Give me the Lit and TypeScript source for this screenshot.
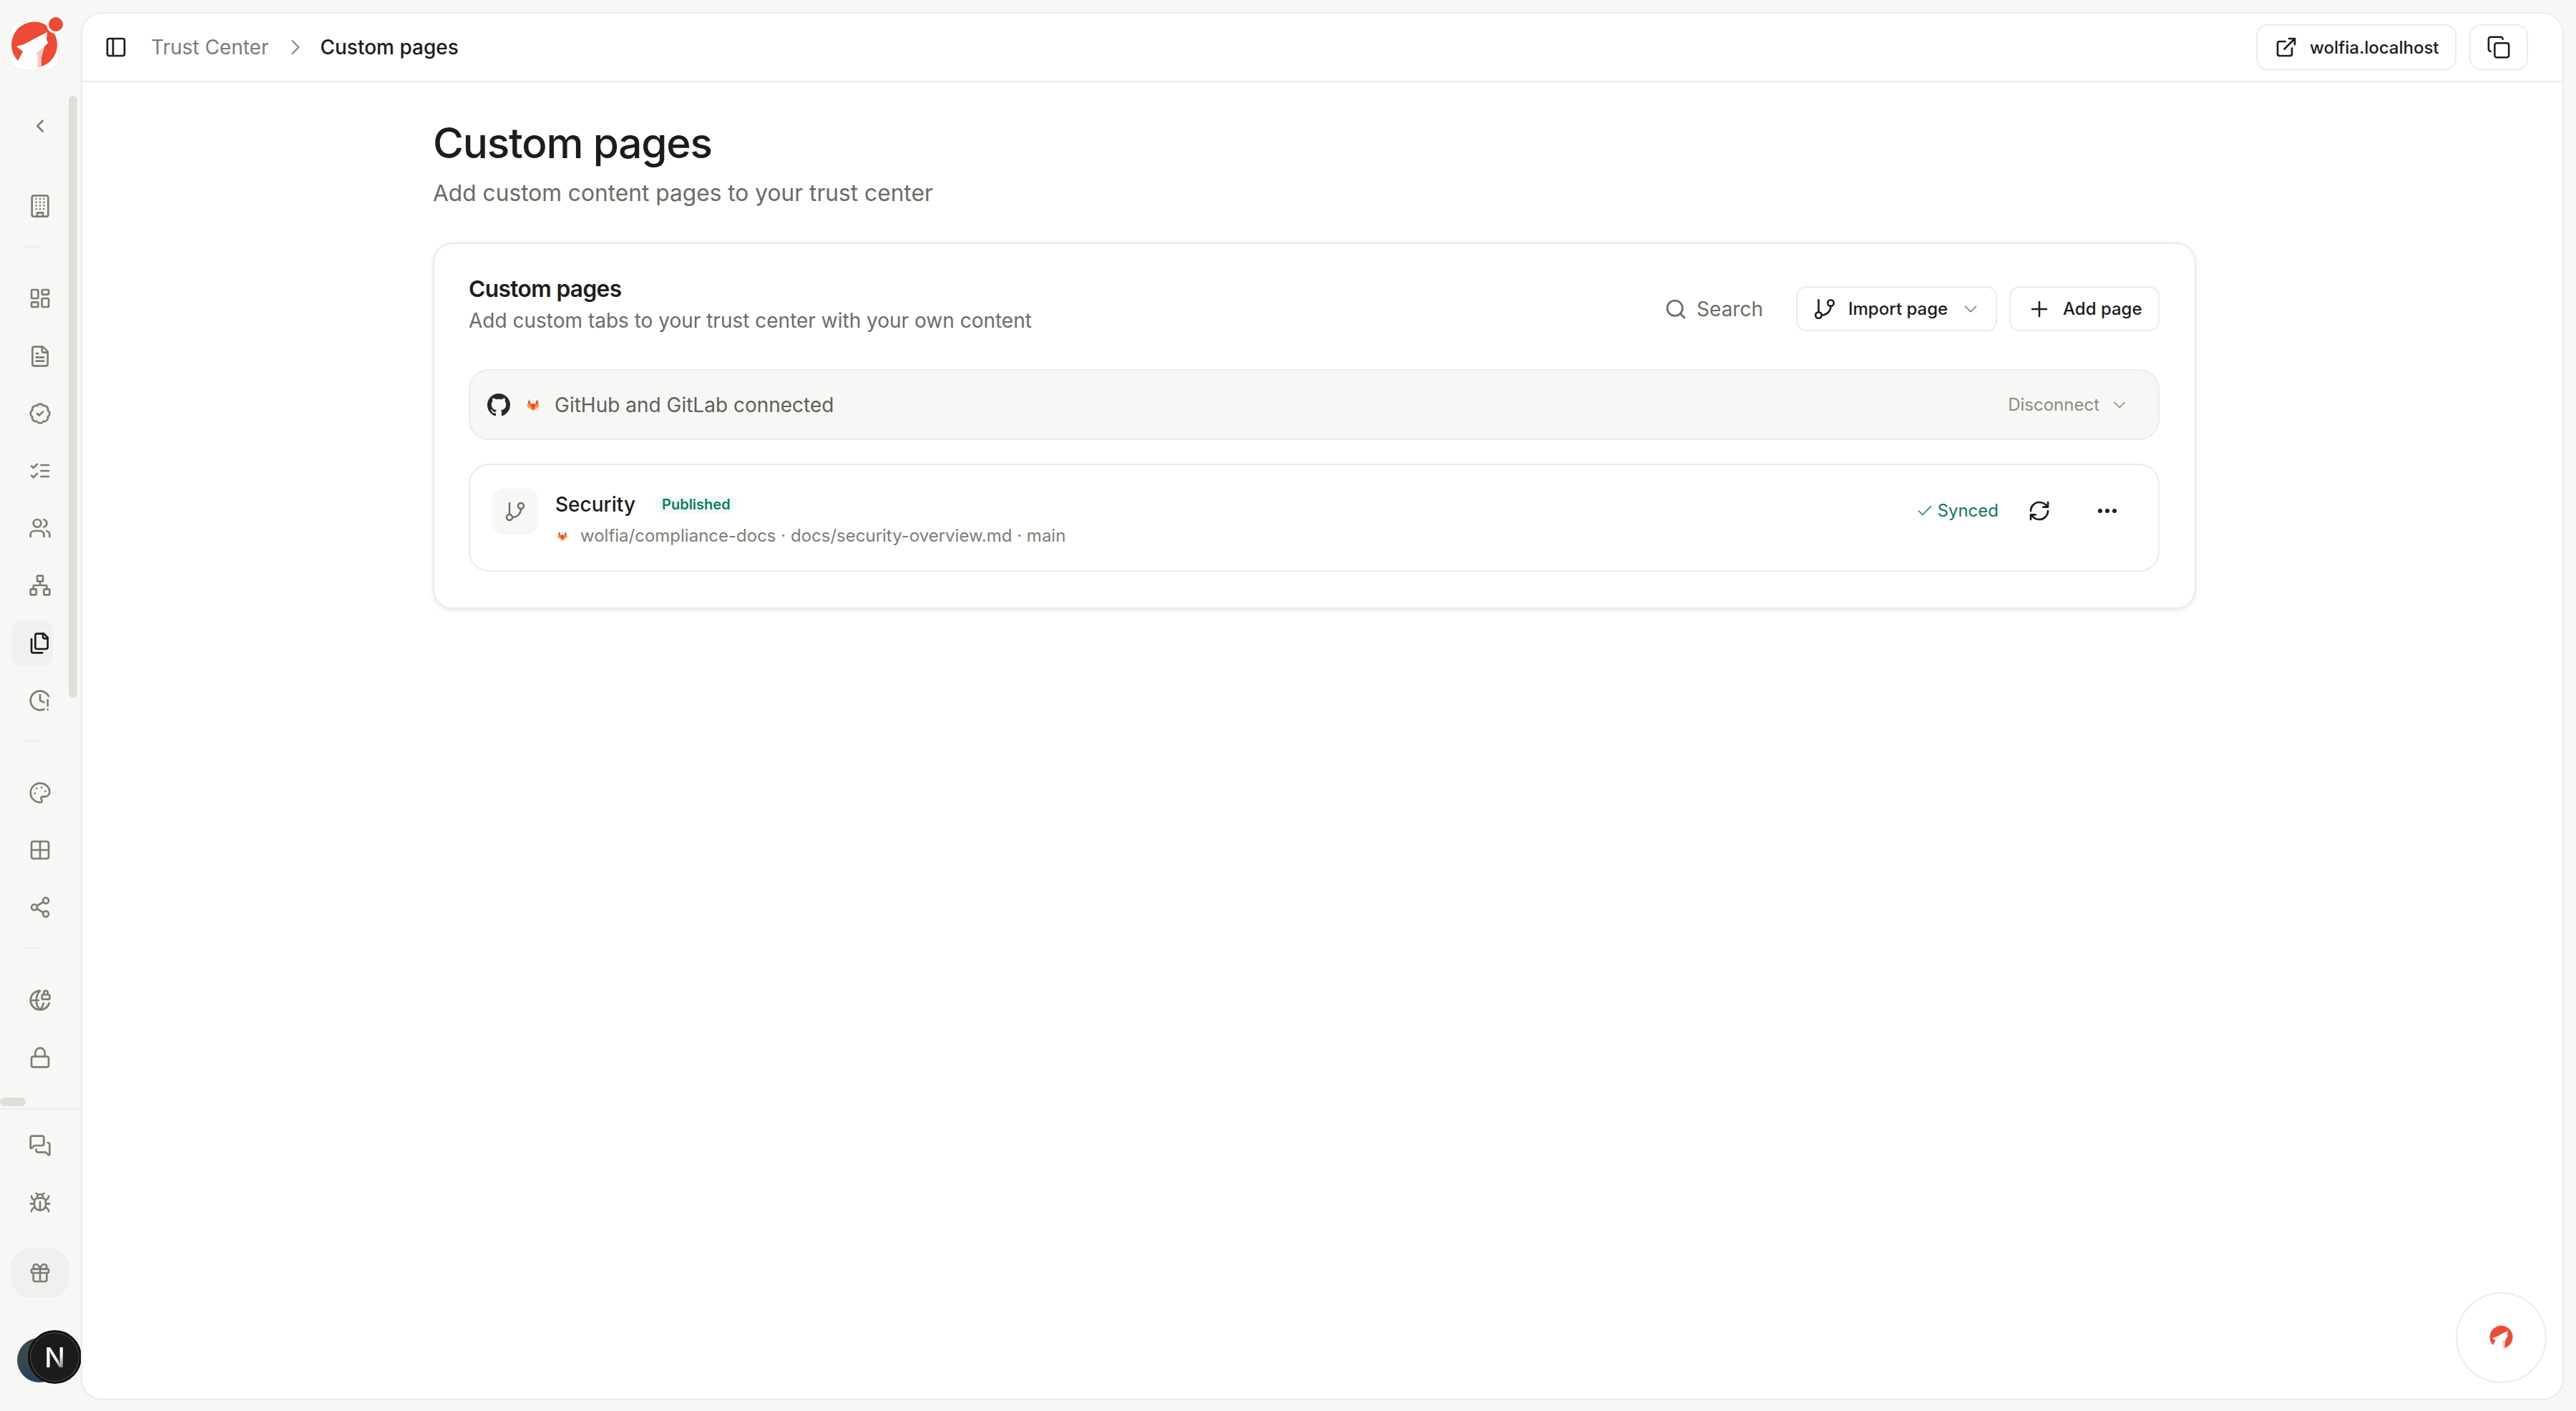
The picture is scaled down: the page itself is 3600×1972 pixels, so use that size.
import { LitElement, html, css, svg } from "lit";
import { customElement } from "lit/decorators.js";

const ICONS: Record<string, unknown> = {
  chevronLeft: svg`<path d="m15 18-6-6 6-6"/>`,
  chevronRight: svg`<path d="m9 18 6-6-6-6"/>`,
  chevronDown: svg`<path d="m6 9 6 6 6-6"/>`,
  building: svg`<rect x="3.5" y="1" width="17" height="22" rx="2"/><path d="M9 23v-4h6v4"/><path d="M8 4.500h.01M12 4.500h.01M16 4.500h.01M8 8h.01M12 8h.01M16 8h.01M8 11.500h.01M12 11.500h.01M16 11.500h.01M8 15h.01M12 15h.01M16 15h.01"/>`,
  dashboard: svg`<rect x="3" y="3" width="7" height="9" rx="1"/><rect x="14" y="3" width="7" height="5" rx="1"/><rect x="14" y="12" width="7" height="9" rx="1"/><rect x="3" y="16" width="7" height="5" rx="1"/>`,
  file: svg`<path d="M15 2H6a2 2 0 0 0-2 2v16a2 2 0 0 0 2 2h12a2 2 0 0 0 2-2V7Z"/><path d="M14 2v4a2 2 0 0 0 2 2h4"/><path d="M10 9H8M16 13H8M16 17H8"/>`,
  badge: svg`<path d="M3.85 8.62a4 4 0 0 1 4.78-4.77 4 4 0 0 1 6.74 0 4 4 0 0 1 4.78 4.78 4 4 0 0 1 0 6.74 4 4 0 0 1-4.77 4.78 4 4 0 0 1-6.75 0 4 4 0 0 1-4.78-4.77 4 4 0 0 1 0-6.76Z"/><path d="m9 12 2 2 4-4"/>`,
  listChecks: svg`<path d="m3 17 2 2 4-4M3 7l2 2 4-4M13 6h8M13 12h8M13 18h8"/>`,
  users: svg`<path d="M16 21v-2a4 4 0 0 0-4-4H6a4 4 0 0 0-4 4v2"/><circle cx="9" cy="7" r="4"/><path d="M22 21v-2a4 4 0 0 0-3-3.87M16 3.13a4 4 0 0 1 0 7.75"/>`,
  network: svg`<rect x="16" y="16" width="6" height="6" rx="1"/><rect x="2" y="16" width="6" height="6" rx="1"/><rect x="9" y="2" width="6" height="6" rx="1"/><path d="M5 16v-3a1 1 0 0 1 1-1h12a1 1 0 0 1 1 1v3M12 12V8"/>`,
  files: svg`<path d="M20 7h-3a2 2 0 0 1-2-2V2"/><path d="M9 18a2 2 0 0 1-2-2V4a2 2 0 0 1 2-2h7l4 4v10a2 2 0 0 1-2 2Z"/><path d="M3 7.6v12.8A1.6 1.6 0 0 0 4.6 22h9.8"/>`,
  clockAlert: svg`<path d="M12 6v6l4 2M16 21.16a10 10 0 1 1 5-13.516M20 11.5v6M20 21.5h.01"/>`,
  palette: svg`<path d="M12 22a1 1 0 0 1 0-20 10 9 0 0 1 10 9 5 5 0 0 1-5 5h-2.25a1.75 1.75 0 0 0-1.4 2.8l.3.4a1.75 1.75 0 0 1-1.4 2.8z"/><path d="M13.5 6.5h.01M17.5 10.5h.01M6.5 12.5h.01M8.5 7.5h.01"/>`,
  grid: svg`<rect x="3" y="3" width="18" height="18" rx="2"/><path d="M12 3v18M3 12h18"/>`,
  share: svg`<circle cx="18" cy="5" r="3"/><circle cx="6" cy="12" r="3"/><circle cx="18" cy="19" r="3"/><path d="m8.59 13.51 6.83 3.98M15.41 6.51l-6.82 3.98"/>`,
  globeLock: svg`<path d="M15.686 15A14.5 14.5 0 0 1 12 22a14.5 14.5 0 0 1 0-20 10 10 0 1 0 9.542 13M2 12h8.5M20 6V4a2 2 0 1 0-4 0v2"/><rect x="14" y="6" width="8" height="5" rx="1"/>`,
  lock: svg`<rect x="3" y="11" width="18" height="11" rx="2"/><path d="M7 11V7a5 5 0 0 1 10 0v4"/>`,
  chat: svg`<path d="M16 10a2 2 0 0 1-2 2H6.828a2 2 0 0 0-1.414.586l-2.202 2.202A.71.71 0 0 1 2 14.286V4a2 2 0 0 1 2-2h10a2 2 0 0 1 2 2z"/><path d="M20 9a2 2 0 0 1 2 2v10.286a.71.71 0 0 1-1.212.502l-2.202-2.202A2 2 0 0 0 17.172 19H10a2 2 0 0 1-2-2v-1"/>`,
  bug: svg`<path d="m8 2 1.88 1.88M14.12 3.88 16 2M9 7.13v-1a3.003 3.003 0 1 1 6 0v1M12 20c-3.3 0-6-2.7-6-6v-3a4 4 0 0 1 4-4h4a4 4 0 0 1 4 4v3c0 3.3-2.7 6-6 6M12 20v-9M6.53 9C4.6 8.8 3 7.1 3 5M6 13H2M3 21c0-2.1 1.7-3.9 3.8-4M20.97 5c0 2.1-1.6 3.8-3.5 4M22 13h-4M17.2 17c2.1.1 3.8 1.9 3.8 4"/>`,
  gift: svg`<rect x="3" y="8" width="18" height="4" rx="1"/><path d="M12 8v13M19 12v7a2 2 0 0 1-2 2H7a2 2 0 0 1-2-2v-7M7.5 8a2.5 2.5 0 0 1 0-5A4.8 8 0 0 1 12 8a4.8 8 0 0 1 4.5-5 2.5 2.5 0 0 1 0 5"/>`,
  panel: svg`<rect x="3" y="3" width="18" height="18" rx="2"/><path d="M9 3v18"/>`,
  external: svg`<path d="M15 3h6v6M10 14 21 3M18 13v6a2 2 0 0 1-2 2H5a2 2 0 0 1-2-2V8a2 2 0 0 1 2-2h6"/>`,
  copy: svg`<rect x="8" y="8" width="14" height="14" rx="2"/><path d="M4 16c-1.1 0-2-.9-2-2V4c0-1.1.9-2 2-2h10c1.1 0 2 .9 2 2"/>`,
  search: svg`<circle cx="11" cy="11" r="8"/><path d="m21 21-4.3-4.3"/>`,
  branch: svg`<path d="M6 3v12"/><circle cx="18" cy="6" r="3"/><circle cx="6" cy="18" r="3"/><path d="M18 9a9 9 0 0 1-9 9"/>`,
  plus: svg`<path d="M5 12h14M12 5v14"/>`,
  check: svg`<path d="M20 6 9 17l-5-5"/>`,
  refresh: svg`<path d="M3 12a9 9 0 0 1 9-9 9.75 9.75 0 0 1 6.74 2.74L21 8M21 3v5h-5M21 12a9 9 0 0 1-9 9 9.75 9.75 0 0 1-6.74-2.74L3 16M8 16H3v5"/>`,
};

function icon(name: string, size = 32, sw = 2) {
  return html`<svg class="ic" width=${size} height=${size} viewBox="0 0 24 24" fill="none" stroke="currentColor" stroke-width=${sw} stroke-linecap="round" stroke-linejoin="round">${ICONS[name]}</svg>`;
}

function wolf(size: number, dot = false) {
  return html`<svg class="wolf" width=${size} height=${size} viewBox="0 0 66 66">
    <circle cx="33" cy="31.5" r="32" fill="#ee4a36"/>
    <path fill="#fff" d="M51 14 L35 22 L28 26 L18 31 L8 34 L17 41 L10 54 L15 66 L42 66 L43 49 L47 34 L52 29 L50 24 Z"/>
    <path fill="#f5c9c3" d="M35 44 L47 34 L43 47 L43 63 L37 63 L38 47 Z"/>
    ${dot
      ? svg`<circle cx="63" cy="3" r="13" fill="#fff"/><circle cx="63" cy="3" r="10" fill="#ee4a36"/>`
      : ""}
  </svg>`;
}

function gitlab(size: number) {
  return html`<svg class="ic" width=${size} height=${size} viewBox="0 0 24 24">
    <path fill="#e24329" d="M12 22 8 10h8z"/>
    <path fill="#fc6d26" d="M12 22 8 10H3zM12 22l4-12h5z"/>
    <path fill="#e24329" d="M3 10 5.5 2.5 8 10zM21 10l-2.500-7.500L16 10z"/>
    <path fill="#fca326" d="M3 10l-1.200 4c-.1.4 0 .8.4 1.100L12 22zM21 10l1.200 4c.1.4 0 .8-.4 1.100L12 22z"/>
  </svg>`;
}

const NAV_GROUPS = [
  ["building"],
  ["dashboard", "file", "badge", "listChecks", "users", "network", "files", "clockAlert"],
  ["palette", "grid", "share"],
  ["globeLock", "lock"],
];

@customElement("app-root")
export class AppRoot extends LitElement {
  static styles = css`
    :host {
      display: flex;
      height: 100vh;
      background: #f7f7f5;
      font-family: Inter, "Liberation Sans", sans-serif;
      color: #1c1c1a;
      overflow: hidden;
    }
    .ic {
      display: block;
      flex: none;
      position: relative;
    }
    .sidebar {
      width: 113px;
      flex: none;
      display: flex;
      flex-direction: column;
      position: relative;
      isolation: isolate;
      color: #7d7d76;
    }
    .logo-wrap {
      height: 136px;
      padding: 31px 0 0 15px;
      box-sizing: border-box;
    }
    .logo {
      width: 66px;
      height: 66px;
      border-radius: 16px;
      background: #fff;
      box-shadow: 0 0 0 1px #eeeeec;
    }
    .wolf {
      display: block;
      overflow: visible;
    }
    .nav {
      flex: 1;
      position: relative;
    }
    .item {
      height: 80.2px;
      width: 80px;
      margin-left: 16px;
      display: flex;
      align-items: center;
      justify-content: center;
      position: relative;
    }
    .item.active {
      color: #1c1c1a;
    }
    .item.active::before {
      content: "";
      position: absolute;
      left: 0;
      top: 8px;
      width: 58px;
      height: 64px;
      border-radius: 16px;
      background: #f0f0ee;
    }
    .back {
      margin-bottom: 32px;
    }
    .sep {
      width: 26px;
      height: 2px;
      background: #ecece9;
      margin: 16px 0 31px 32px;
    }
    .vthumb {
      position: absolute;
      left: 96px;
      top: -2px;
      width: 12px;
      height: 841px;
      border-radius: 6px;
      background: #dededa;
    }
    .hthumb {
      position: absolute;
      left: 0;
      bottom: 3px;
      width: 36px;
      height: 12px;
      border-radius: 6px;
      background: #dededa;
    }
    .foot {
      border-top: 2px solid #ebebe9;
      padding: 10px 0 38px;
    }
    .foot .item {
      height: 80px;
    }
    .foot .gift {
      height: 68px;
      margin-top: 24px;
      border-radius: 26px;
      background: #f0f0ee;
      box-shadow: inset 0 0 0 1px #ebebe9;
    }
    .avatars {
      position: relative;
      height: 75px;
      margin-top: 46px;
    }
    .av-photo {
      position: absolute;
      left: 24px;
      top: 11px;
      width: 62px;
      height: 62px;
      border-radius: 50%;
      background: linear-gradient(#36494c 60%, #1f3f63);
    }
    .av-next {
      position: absolute;
      left: 39px;
      top: 0;
      width: 75px;
      height: 75px;
      box-sizing: border-box;
      border-radius: 50%;
      background: #1b1b1b;
      border: 3px solid #111;
      box-shadow: inset 0 0 0 1px #555;
      display: flex;
      align-items: center;
      justify-content: center;
      font-size: 38px;
      font-weight: 500;
    }
    .av-next span {
      background: linear-gradient(135deg, #fff 55%, #777 85%);
      -webkit-background-clip: text;
      background-clip: text;
      color: transparent;
    }
    .panel {
      flex: 1;
      margin: 17px 17px 15px 0;
      border: 2px solid #ebebe9;
      border-radius: 30px;
      background: #fff;
      position: relative;
      min-width: 0;
    }
    .topbar {
      height: 94px;
      border-bottom: 2px solid #ebebe9;
      display: flex;
      align-items: center;
      padding: 0 48px 0 31px;
    }
    .crumb {
      font-size: 28px;
      color: #7d7d76;
      margin-left: 33px;
    }
    .crumb-sep {
      color: #7d7d76;
      margin: 0 16px 0 20px;
    }
    .crumb-now {
      font-size: 28px;
      font-weight: 500;
      color: #1c1c1a;
    }
    .spacer {
      flex: 1;
    }
    .btn {
      display: flex;
      align-items: center;
      box-sizing: border-box;
      border: 2px solid #ebebe9;
      border-radius: 14px;
      background: #fff;
      font-size: 24px;
      font-weight: 500;
      color: #1c1c1a;
    }
    .btn.link {
      width: 280px;
      height: 64px;
      padding-left: 24px;
      gap: 17px;
      border-radius: 16px;
    }
    .btn.copy {
      width: 82px;
      height: 64px;
      justify-content: center;
      margin-left: 18px;
      border-radius: 16px;
    }
    .content {
      padding: 45px 0 0 490px;
      width: 2464px;
    }
    h1 {
      margin: 0;
      font-size: 58.5px;
      line-height: 80px;
      font-weight: 500;
      letter-spacing: -0.02em;
    }
    .lead {
      margin: 8px 0 47px;
      font-size: 31.7px;
      line-height: 44px;
      color: #6c6c66;
    }
    .card {
      box-sizing: border-box;
      height: 512px;
      border: 2px solid #ebebe9;
      border-radius: 28px;
      padding: 43px 49px 0 48px;
      box-shadow: 0 2px 6px rgba(0, 0, 0, 0.1);
    }
    .card-head {
      display: flex;
      justify-content: space-between;
      align-items: flex-start;
      margin-bottom: 46px;
    }
    h2 {
      margin: 0 0 2px;
      font-size: 31.7px;
      line-height: 40px;
      font-weight: 600;
      letter-spacing: -0.02em;
    }
    .card-sub {
      font-size: 28px;
      line-height: 44px;
      color: #6c6c66;
    }
    .actions {
      display: flex;
      align-items: center;
      padding-top: 16px;
    }
    .search {
      display: flex;
      align-items: center;
      gap: 13px;
      font-size: 28px;
      color: #6c6c66;
      margin-right: 46px;
    }
    .btn.import,
    .btn.add {
      height: 63px;
    }
    .btn.import {
      width: 281px;
      padding-left: 21px;
      gap: 16px;
      margin-right: 17px;
    }
    .btn.import .ic:last-child {
      color: #7d7d76;
      margin-left: 1px;
    }
    .btn.add {
      width: 210px;
      padding-left: 23px;
      gap: 16px;
    }
    .connect {
      height: 99px;
      box-sizing: border-box;
      display: flex;
      align-items: center;
      border: 2px solid #ebebe9;
      border-radius: 28px;
      background: #f7f7f5;
      padding: 0 40px 0 24px;
      margin-bottom: 33px;
    }
    .gh {
      fill: #24292f;
      margin-right: 22px;
      display: block;
    }
    .connect-text {
      font-size: 28px;
      color: #5f5f5a;
      margin-left: 20px;
    }
    .disconnect {
      display: flex;
      align-items: center;
      gap: 14px;
      margin-left: auto;
      font-size: 24px;
      color: #8b8b85;
    }
    .page-row {
      height: 151px;
      box-sizing: border-box;
      display: flex;
      align-items: center;
      border: 2px solid #ebebe9;
      border-radius: 28px;
      padding: 0 58px 0 31px;
    }
    .page-icon {
      width: 64px;
      height: 64px;
      border-radius: 16px;
      background: #f7f7f5;
      color: #6c6c66;
      display: flex;
      align-items: center;
      justify-content: center;
      margin: 0 24px 18px 0;
    }
    .page-text {
      margin-top: 4px;
    }
    .page-title {
      display: flex;
      align-items: center;
      gap: 28px;
      font-size: 28px;
      line-height: 40px;
      font-weight: 500;
    }
    .badge {
      font-size: 20px;
      line-height: 24px;
      font-weight: 600;
      color: #0d7a66;
      background: #f2faf7;
      border-radius: 10px;
      padding: 0 9px;
    }
    .page-sub {
      display: flex;
      align-items: center;
      margin-top: 6px;
      font-size: 24px;
      line-height: 36px;
      color: #7d7d76;
    }
    .page-sub .ic {
      margin: 0 17px 0 2px;
    }
    .row-right {
      display: flex;
      align-items: center;
      margin: 0 0 20px auto;
    }
    .synced {
      display: flex;
      align-items: center;
      gap: 5px;
      font-size: 24px;
      font-weight: 400;
      color: #0d7a66;
    }
    .sync {
      margin-left: 41px;
      color: #1c1c1a;
    }
    .dots {
      margin-left: 66px;
      display: flex;
      gap: 4px;
    }
    .dots i {
      width: 6px;
      height: 6px;
      border-radius: 50%;
      background: #1c1c1a;
    }
    .fab {
      position: absolute;
      right: 22px;
      bottom: 22px;
      width: 127px;
      height: 127px;
      box-sizing: border-box;
      border: 2px solid #ebebe9;
      border-radius: 50%;
      background: #fff;
      display: flex;
      align-items: center;
      justify-content: center;
    }
  `;

  renderNav() {
    return NAV_GROUPS.map(
      (group, i) => html`
        ${i > 0 ? html`<div class="sep"></div>` : ""}
        ${group.map(
          (name) =>
            html`<div class="item ${name === "files" ? "active" : ""}">${icon(name)}</div>`,
        )}
      `,
    );
  }

  render() {
    return html`
      <aside class="sidebar">
        <div class="logo-wrap"><div class="logo">${wolf(66, true)}</div></div>
        <div class="nav">
          <div class="vthumb"></div>
          <div class="item back">${icon("chevronLeft", 30)}</div>
          ${this.renderNav()}
          <div class="hthumb"></div>
        </div>
        <div class="foot">
          <div class="item">${icon("chat")}</div>
          <div class="item">${icon("bug")}</div>
          <div class="item gift">${icon("gift")}</div>
          <div class="avatars">
            <div class="av-photo"></div>
            <div class="av-next"><span>N</span></div>
          </div>
        </div>
      </aside>
      <section class="panel">
        <header class="topbar">
          ${icon("panel", 32)}
          <span class="crumb">Trust Center</span>
          <span class="crumb-sep">${icon("chevronRight", 36, 1.3)}</span>
          <span class="crumb-now">Custom pages</span>
          <span class="spacer"></span>
          <div class="btn link">${icon("external", 32)}wolfia.localhost</div>
          <div class="btn copy">${icon("copy", 34, 1.8)}</div>
        </header>
        <div class="content">
          <h1>Custom pages</h1>
          <p class="lead">Add custom content pages to your trust center</p>
          <div class="card">
            <div class="card-head">
              <div>
                <h2>Custom pages</h2>
                <div class="card-sub">Add custom tabs to your trust center with your own content</div>
              </div>
              <div class="actions">
                <div class="search">${icon("search", 32)}Search</div>
                <div class="btn import">
                  ${icon("branch", 34, 1.8)}Import page${icon("chevronDown", 30, 1.4)}
                </div>
                <div class="btn add">${icon("plus", 34, 1.8)}Add page</div>
              </div>
            </div>
            <div class="connect">
              <svg class="gh" width="32" height="32" viewBox="0 0 16 16"><path d="M8 0C3.58 0 0 3.58 0 8c0 3.54 2.29 6.530 5.470 7.590.4.070.55-.17.55-.38 0-.19-.010-.82-.010-1.490-2.010.37-2.530-.49-2.690-.94-.09-.23-.48-.94-.82-1.130-.28-.15-.68-.52-.010-.53.63-.010 1.080.58 1.230.82.72 1.210 1.870.87 2.330.66.070-.52.28-.87.51-1.070-1.780-.2-3.640-.89-3.640-3.950 0-.87.31-1.590.82-2.150-.08-.2-.36-1.020.08-2.120 0 0 .67-.21 2.200.82.64-.18 1.320-.27 2-.27s1.360.09 2 .27c1.530-1.040 2.200-.82 2.200-.82.44 1.100.16 1.920.08 2.120.51.56.82 1.270.82 2.150 0 3.070-1.870 3.750-3.650 3.950.29.25.54.73.54 1.480 0 1.070-.010 1.930-.010 2.200 0 .21.15.46.55.38A8.010 8.010 0 0 0 16 8c0-4.420-3.580-8-8-8z"/></svg>
              ${gitlab(20)}
              <span class="connect-text">GitHub and GitLab connected</span>
              <div class="disconnect">Disconnect${icon("chevronDown", 28, 1.5)}</div>
            </div>
            <div class="page-row">
              <div class="page-icon">${icon("branch", 32, 1.8)}</div>
              <div class="page-text">
                <div class="page-title">Security<span class="badge">Published</span></div>
                <div class="page-sub">
                  ${gitlab(16)}wolfia/compliance-docs · docs/security-overview.md · main
                </div>
              </div>
              <div class="row-right">
                <div class="synced">${icon("check", 26, 1.4)}Synced</div>
                <div class="sync">${icon("refresh", 32)}</div>
                <div class="dots"><i></i><i></i><i></i></div>
              </div>
            </div>
          </div>
        </div>
        <div class="fab">${wolf(33)}</div>
      </section>
    `;
  }
}
